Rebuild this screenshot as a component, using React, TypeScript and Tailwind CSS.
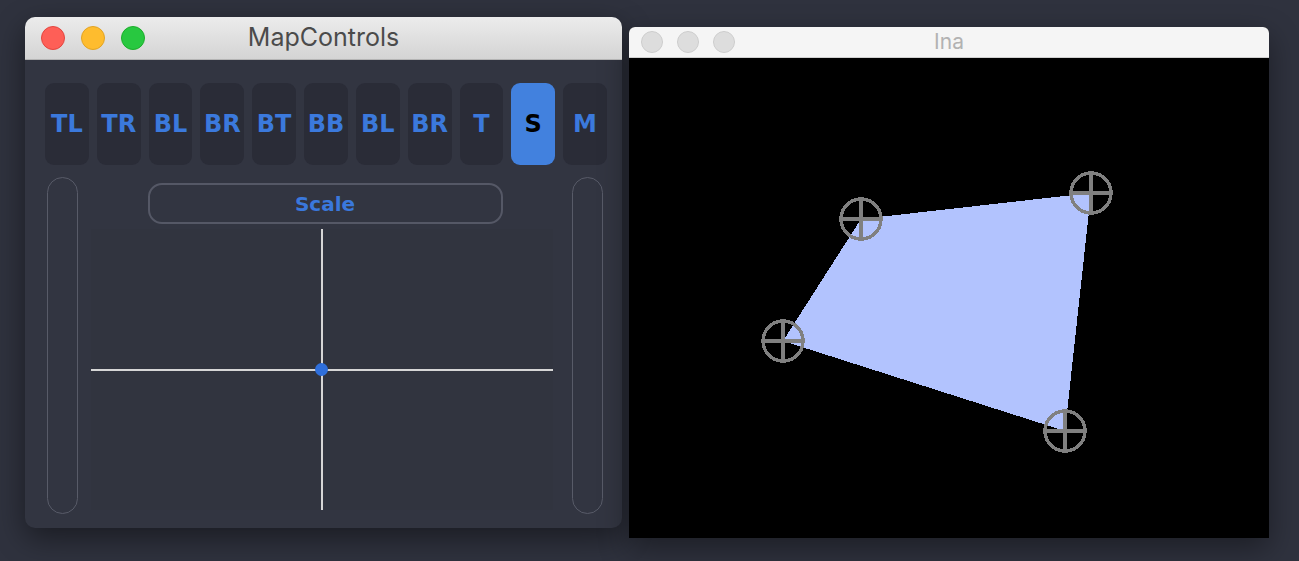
import React from "react";

const labels = ["TL", "TR", "BL", "BR", "BT", "BB", "BL", "BR", "T", "S", "M"];

const markers = [
  [232, 161],
  [462, 135],
  [436, 373],
  [154, 283],
];

function Lights() {
  return (
    <div className="flex items-center gap-4">
      <span className="w-6 h-6 rounded-full bg-[#fe5f57] border border-[#e2463f]" />
      <span className="w-6 h-6 rounded-full bg-[#febc2e] border border-[#e1a325]" />
      <span className="w-6 h-6 rounded-full bg-[#28c840] border border-[#1dad2b]" />
    </div>
  );
}

function MapControls() {
  return (
    <div className="w-[597px] h-[511px] rounded-[10px] bg-[#323541] shadow-[0_10px_30px_rgba(0,0,0,0.45)] flex flex-col overflow-hidden">
      <div className="relative h-[43px] shrink-0 flex items-center pl-[16px] bg-gradient-to-b from-[#ececec] to-[#d4d4d4] border-b border-[#b4b4b4]">
        <Lights />
        <div className="absolute inset-0 flex items-center justify-center text-[25px] text-[#4b4b4b] font-['Inter',sans-serif]">
          MapControls
        </div>
      </div>
      <div className="flex gap-[8px] pl-[20px] pr-[15px] pt-[23px]">
        {labels.map((l, i) => (
          <div
            key={i}
            className={
              "w-[44px] h-[82px] rounded-[9px] flex items-center justify-center text-[24px] font-bold font-['DejaVu_Sans',sans-serif] " +
              (l === "S" ? "bg-[#4281de] text-black" : "bg-[#2a2c37] text-[#3b79dc]")
            }
          >
            {l}
          </div>
        ))}
      </div>
      <div className="flex pl-[22px] pt-[12px]">
        <div className="w-[31px] h-[337px] rounded-full border-[1.5px] border-[#585b68]" />
        <div className="ml-[13px] w-[462px] flex flex-col items-center pt-[6px]">
          <div className="w-[355px] h-[41px] ml-[6px] rounded-[14px] border-2 border-[#555866] flex items-center justify-center text-[20px] font-bold text-[#3a78dc] font-['DejaVu_Sans',sans-serif]">
            Scale
          </div>
          <div className="relative mt-[5px] w-[462px] h-[281px] bg-[#31343f]">
            <div className="absolute left-0 right-0 top-[140px] h-[2px] bg-[#d6d6d6]" />
            <div className="absolute top-0 bottom-0 left-[230px] w-[2px] bg-[#d6d6d6]" />
            <div className="absolute left-[224px] top-[134px] w-[13px] h-[13px] rounded-full bg-[#2f6fdc]" />
          </div>
        </div>
        <div className="ml-[19px] w-[31px] h-[337px] rounded-full border-[1.5px] border-[#585b68]" />
      </div>
    </div>
  );
}

function Ina() {
  return (
    <div className="mt-[10px] w-[640px] h-[511px] rounded-t-[6px] bg-black shadow-[0_10px_30px_rgba(0,0,0,0.4)] flex flex-col overflow-hidden">
      <div className="relative h-[31px] shrink-0 flex items-center pl-[12px] bg-[#f5f5f5] border-b border-[#d0d0d0]">
        <div className="flex items-center gap-[14px]">
          <span className="w-[22px] h-[22px] rounded-full bg-[#dddddd] border border-[#cdcdcd]" />
          <span className="w-[22px] h-[22px] rounded-full bg-[#dddddd] border border-[#cdcdcd]" />
          <span className="w-[22px] h-[22px] rounded-full bg-[#dddddd] border border-[#cdcdcd]" />
        </div>
        <div className="absolute inset-0 flex items-center justify-center text-[21px] text-[#b2b2b2] font-['Inter',sans-serif]">
          Ina
        </div>
      </div>
      <svg width="640" height="480" viewBox="0 0 640 480" shapeRendering="crispEdges">
        <polygon points="232,161 462,135 436,373 154,283" fill="#b2c3fe" />
        {markers.map(([x, y], i) => (
          <g key={i} stroke="#808080" strokeWidth="3.5" fill="none">
            <circle cx={x} cy={y} r={20} />
            <line x1={x - 20} y1={y} x2={x + 20} y2={y} />
            <line x1={x} y1={y - 20} x2={x} y2={y + 20} />
          </g>
        ))}
      </svg>
    </div>
  );
}

export default function App() {
  return (
    <div className="w-[1299px] h-[561px] bg-[#2f323e] flex items-start gap-[7px] pl-[25px] pt-[17px] overflow-hidden">
      <MapControls />
      <Ina />
    </div>
  );
}
